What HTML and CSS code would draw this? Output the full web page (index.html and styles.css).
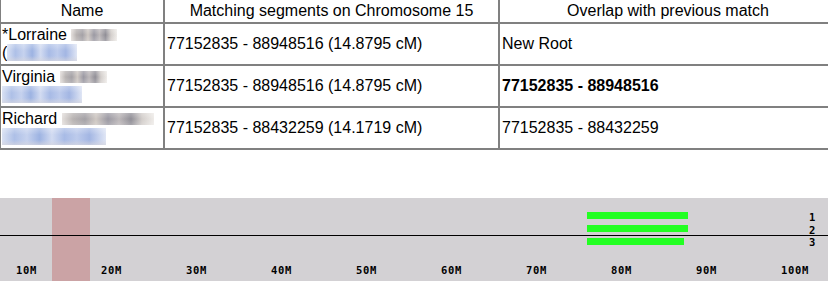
FILE: index.html
```html
<!DOCTYPE html>
<html>
<head>
<meta charset="utf-8">
<link rel="stylesheet" href="styles.css">
</head>
<body>
<table class="matches">
  <tr>
    <th class="c1">Name</th>
    <th class="c2">Matching segments on Chromosome 15</th>
    <th class="c3">Overlap with previous match</th>
  </tr>
  <tr>
    <td class="name">*Lorraine <span class="blur sur w46"></span><br>(<span class="blur link w70"></span></td>
    <td>77152835 - 88948516 (14.8795 cM)</td>
    <td>New Root</td>
  </tr>
  <tr>
    <td class="name">Virginia <span class="blur sur w47"></span><br><span class="blur link w80"></span></td>
    <td>77152835 - 88948516 (14.8795 cM)</td>
    <td><b>77152835 - 88948516</b></td>
  </tr>
  <tr>
    <td class="name">Richard <span class="blur sur w92"></span><br><span class="blur link w104"></span></td>
    <td>77152835 - 88432259 (14.1719 cM)</td>
    <td>77152835 - 88432259</td>
  </tr>
</table>

<div class="chart">
  <div class="centromere"></div>
  <div class="axis"></div>
  <div class="bar bar1"></div>
  <div class="bar bar2"></div>
  <div class="bar bar3"></div>
  <div class="num n1">1</div>
  <div class="num n2">2</div>
  <div class="num n3">3</div>
  <div class="ticks">
    <span>10M</span><span>20M</span><span>30M</span><span>40M</span><span>50M</span>
    <span>60M</span><span>70M</span><span>80M</span><span>90M</span><span>100M</span>
  </div>
</div>
</body>
</html>
```
FILE: styles.css
```css
html, body {
  margin: 0;
  padding: 0;
  overflow: hidden;
  background: #fff;
}
body {
  font-family: "Liberation Sans", Arial, sans-serif;
  font-size: 16px;
  color: #000;
}
.matches {
  border-collapse: separate;
  border-spacing: 0;
  table-layout: fixed;
  width: 839px;
  margin-left: -1px;
}
.matches th,
.matches td {
  box-sizing: border-box;
  border-right: 2px solid #808080;
  border-bottom: 2px solid #808080;
  padding: 2px 2px;
  line-height: 18px;
  font-weight: normal;
  vertical-align: middle;
  text-align: left;
  white-space: nowrap;
}
.matches th {
  text-align: center;
  height: 24px;
}
.matches td {
  height: 42px;
}
.matches th:first-child,
.matches td:first-child {
  border-left: 2px solid #808080;
}
.c1 { width: 166px; }
.c2 { width: 335px; }
.c3 { width: 338px; }
.matches td.name {
  padding-left: 1px;
  white-space: normal;
}
.blur {
  display: inline-block;
}
.sur {
  height: 12px;
  vertical-align: -1px;
  background:
    linear-gradient(180deg, rgba(255,255,255,0.25), rgba(255,255,255,0) 50%, rgba(255,255,255,0.2)),
    linear-gradient(90deg, #e4dfdc 0%, #b8b3b2 12%, #a4a1a6 25%, #cfc8c3 37%, #9a98a2 50%, #bdb8ba 62%, #908e96 75%, #d3cecb 87%, #efece9 100%);
}
.link {
  height: 17px;
  vertical-align: -3px;
  background:
    linear-gradient(180deg, rgba(255,255,255,0.3), rgba(255,255,255,0) 40%, rgba(255,255,255,0) 70%, rgba(214,214,222,0.7)),
    linear-gradient(90deg, #d9e1f3 0%, #aec0e7 12%, #c6d2ee 24%, #9db3e2 36%, #d2dbf1 48%, #a8bbe6 60%, #bdcbec 72%, #a3b6e3 84%, #e0e6f5 100%);
}
.w46 { width: 46px; }
.w47 { width: 47px; }
.w70 { width: 70px; }
.w80 { width: 80px; }
.w92 { width: 92px; }
.w104 { width: 104px; }

.chart {
  position: relative;
  margin-top: 48px;
  height: 83px;
  background: #d3d1d4;
  overflow: hidden;
}
.centromere {
  position: absolute;
  left: 52px;
  top: 0;
  width: 38px;
  height: 100%;
  background: #cba3a5;
}
.axis {
  position: absolute;
  left: 0;
  right: 0;
  top: 37px;
  height: 1px;
  background: #000;
}
.bar {
  position: absolute;
  left: 587px;
  width: 101px;
  height: 7px;
  background: #22ff22;
}
.bar1 { top: 14px; }
.bar2 { top: 27px; }
.bar3 { top: 40px; width: 97px; }
.num,
.ticks {
  font-family: "DejaVu Sans Mono", "Liberation Mono", monospace;
  font-weight: bold;
  font-size: 10.5px;
  line-height: 10px;
  letter-spacing: 0.7px;
  color: #000;
}
.num {
  position: absolute;
  left: 809px;
}
.n1 { top: 14px; }
.n2 { top: 27px; }
.n3 { top: 39px; }
.ticks {
  position: absolute;
  left: 16px;
  top: 67px;
  display: flex;
}
.ticks span {
  flex: 0 0 85px;
  white-space: nowrap;
}
```
